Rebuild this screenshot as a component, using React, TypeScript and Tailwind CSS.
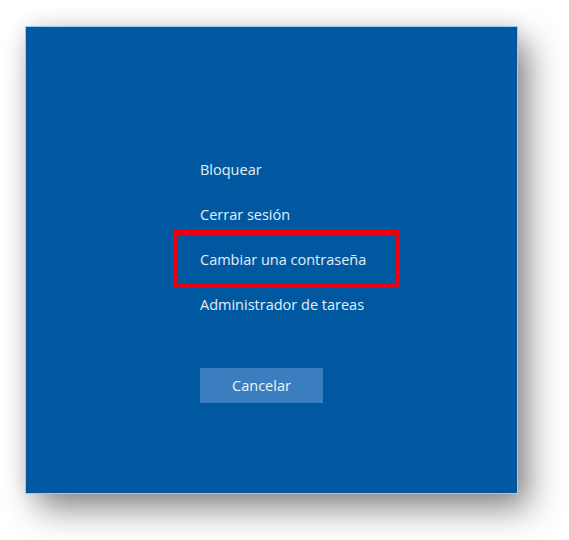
import React from 'react';

const items = ['Bloquear', 'Cerrar sesión', 'Cambiar una contraseña', 'Administrador de tareas'];

export default function App() {
  return (
    <div className="w-[569px] h-[540px] bg-white pt-[27px] pl-[26px] overflow-hidden">
      <div className="w-[491px] h-[466px] bg-[#0059a0] ring-1 ring-[#9fcbe8] shadow-[12px_16px_32px_rgba(0,0,0,0.45),0_0_20px_rgba(0,0,0,0.12)] pl-[174px] pt-[133px]">
        <div
          className="flex flex-col gap-[25px] text-[14.5px] leading-[20px] text-[#e3eef8]"
          style={{ fontFamily: '"Open Sans", "Noto Sans", sans-serif' }}
        >
          {items.map((label, i) => (
            <div key={label} className="relative">
              <span>{label}</span>
              {i === 2 && (
                <div className="absolute -left-[27px] -top-[20px] w-[227px] h-[58px] border-[5px] border-[#ec0010]" />
              )}
            </div>
          ))}
        </div>
        <button
          className="mt-[53px] w-[123px] h-[35px] bg-[#3a7ebf] text-[14.5px] text-[#eef5fb] flex items-center justify-center"
          style={{ fontFamily: '"Open Sans", "Noto Sans", sans-serif' }}
        >
          Cancelar
        </button>
      </div>
    </div>
  );
}
